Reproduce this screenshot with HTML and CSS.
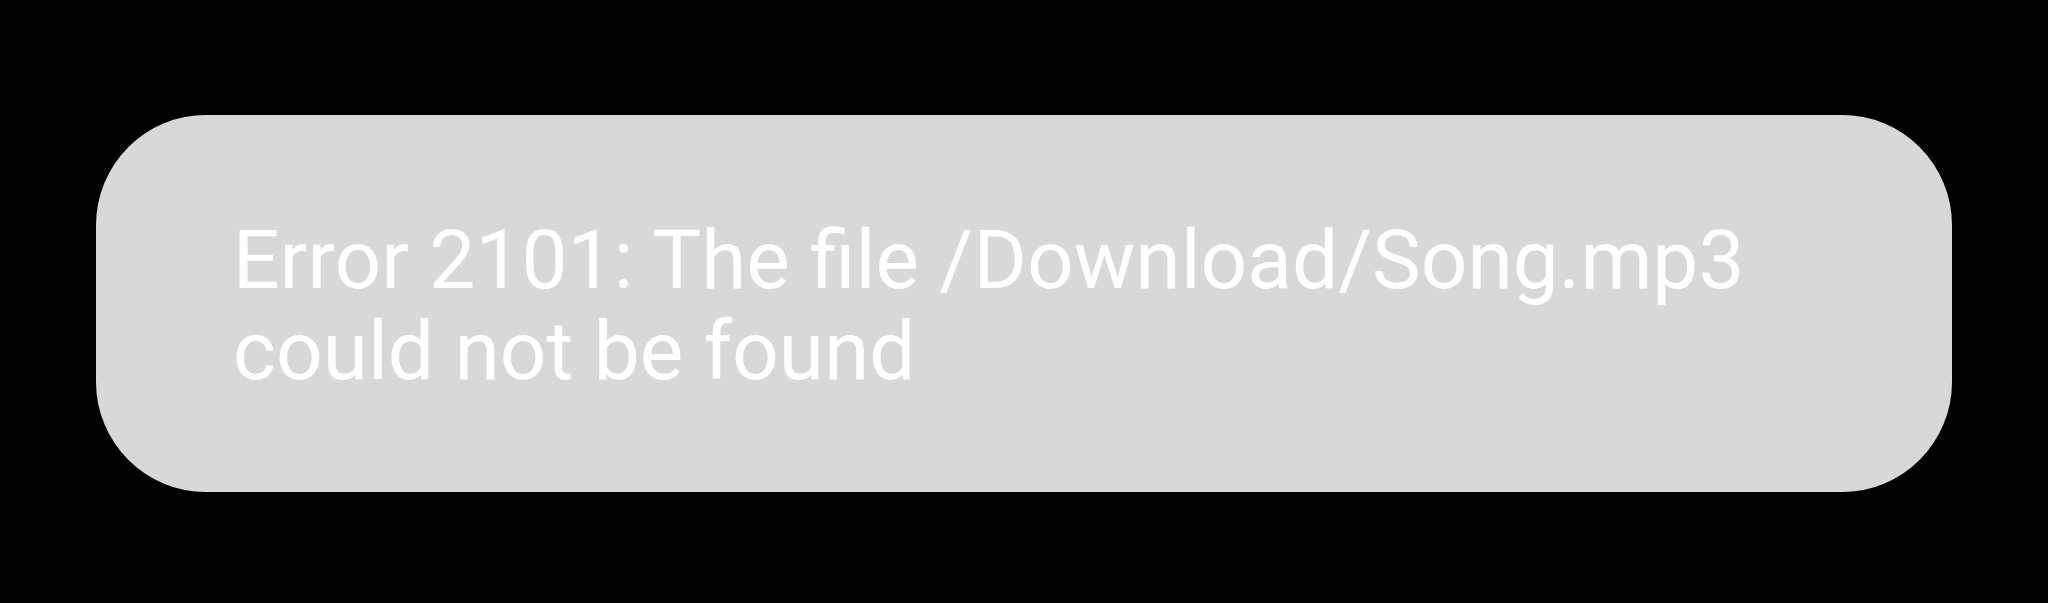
FILE: index.html
```html
<!DOCTYPE html>
<html>
<head>
<meta charset="utf-8">
<link rel="stylesheet" href="styles.css">
</head>
<body>
<div class="toast">
  <p class="toast-text">Error 2101: The file /Download/Song.mp3<br>could not be found</p>
</div>
</body>
</html>
```
FILE: styles.css
```css
html, body {
  margin: 0;
  padding: 0;
  background: #000;
  width: 2048px;
  height: 603px;
  overflow: hidden;
}
body {
  padding: 115px 0 0 96px;
  box-sizing: border-box;
}
.toast {
  width: 1856px;
  height: 377px;
  box-sizing: border-box;
  background: #d8d8d8;
  border-radius: 110px;
  padding: 100px 0 0 137px;
}
.toast-text {
  margin: 0;
  font-family: Roboto, "Liberation Sans", sans-serif;
  font-size: 82px;
  line-height: 91px;
  color: #fff;
  white-space: nowrap;
}
```
